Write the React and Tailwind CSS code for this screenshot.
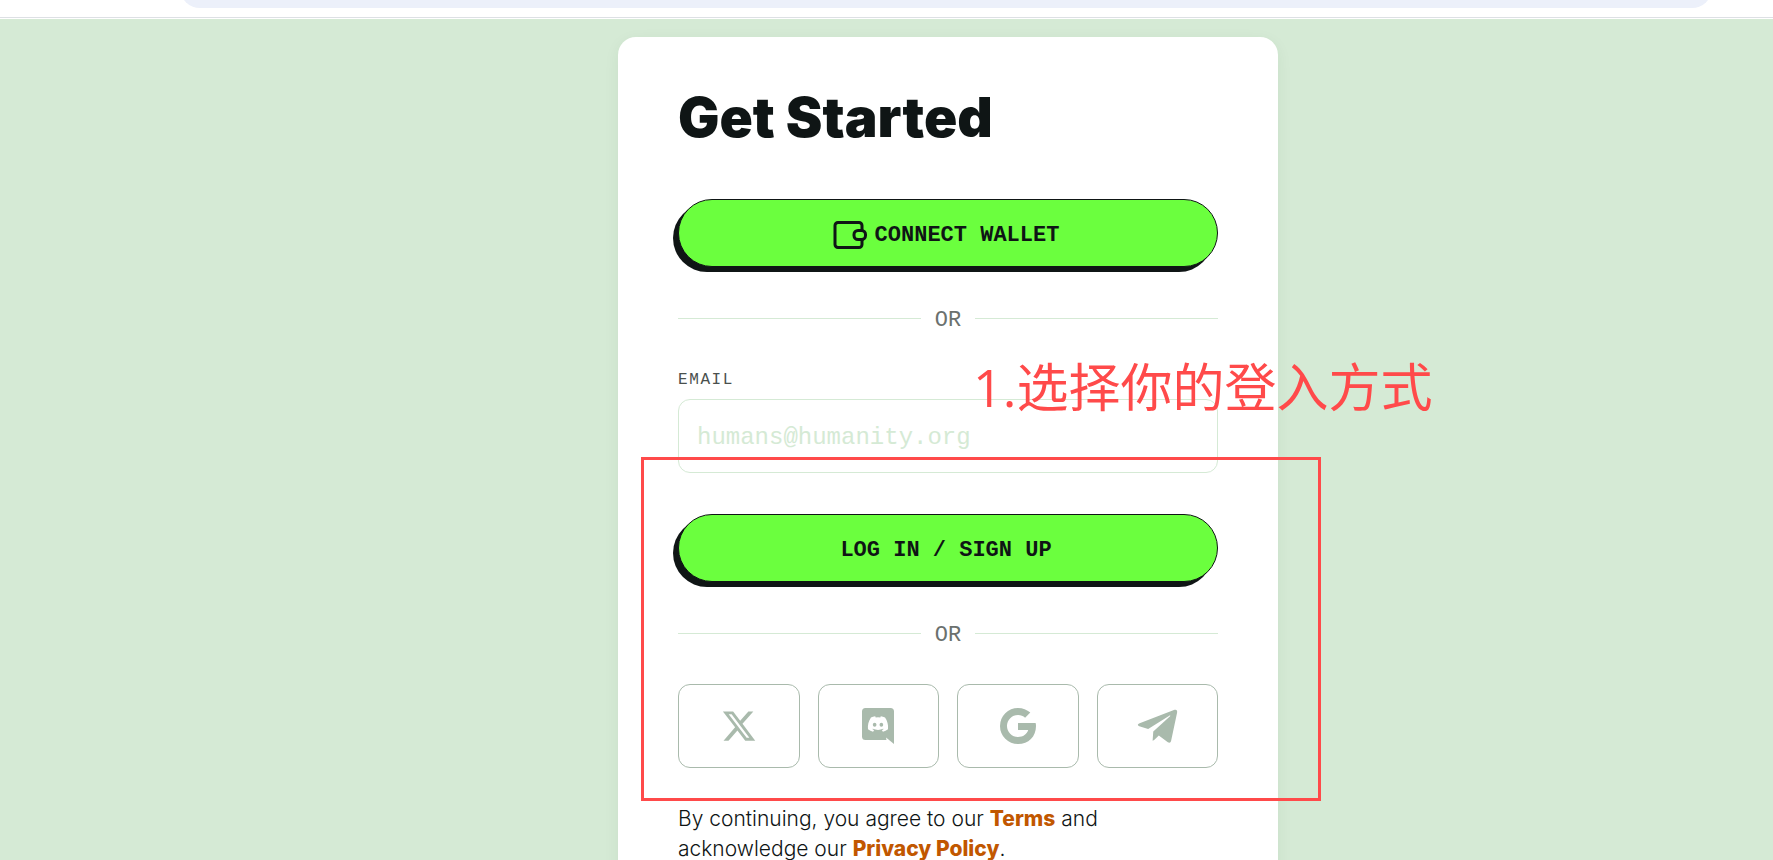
import React from 'react';
import { FaXTwitter, FaDiscord } from 'react-icons/fa6';
import { FaTelegramPlane } from 'react-icons/fa';

const WalletIcon = () => (
    <svg width="34" height="28" viewBox="0 0 34 28" fill="none" stroke="currentColor" strokeWidth="3" aria-hidden="true">
        <path d="M29 9V4.5a3 3 0 0 0-3-3H5a3 3 0 0 0-3 3v19a3 3 0 0 0 3 3h21a3 3 0 0 0 3-3V19" />
        <rect x="21" y="9.5" width="11.5" height="9" rx="4" />
    </svg>
);

const DiscordIcon = () => (
    <svg width="32" height="36" viewBox="0 0 32 36" aria-hidden="true">
        <path fill="currentColor" d="M3.5 0h25A3.5 3.5 0 0 1 32 3.5V36l-8-6.5.5 2.5h-21A3.5 3.5 0 0 1 0 28.5v-25A3.5 3.5 0 0 1 3.5 0z" />
        <FaDiscord x="5" y="5" size={22} color="#ffffff" />
    </svg>
);

const GoogleIcon = () => (
    <svg width="36" height="36" viewBox="0 0 36 36" fill="currentColor" aria-hidden="true">
        <path d="M35.6 15H18v7h10.2c-1.2 4.200-5.200 7-10.200 7a11 11 0 0 1 0-22c2.800 0 5.200 1 7.100 2.700l5.200-5.100C27 1.700 22.700 0 18 0a18 18 0 0 0 0 36c10.500 0 18-7.300 18-18 0-1-.1-2-.4-3z" />
    </svg>
);

const PrimaryButton = ({ icon, children, type = 'button' }) => (
    <button
        type={type}
        className="flex h-[68px] w-full items-center justify-center gap-2 rounded-full border border-[#0f1515] bg-[#6bff3e] pt-1 pr-1 font-['Liberation_Mono',monospace] text-[22px] font-bold text-[#0f1515] shadow-[-5px_5px_0_#0f1515]"
    >
        {icon}
        {children}
    </button>
);

const Divider = () => (
    <div className="flex h-8 items-center gap-3.5">
        <span className="h-px flex-1 bg-[#d5ead5]" />
        <span className="pt-1 font-['Liberation_Mono',monospace] text-[22px] text-[#6b716e]">OR</span>
        <span className="h-px flex-1 bg-[#d5ead5]" />
    </div>
);

const socials = [
    { name: 'X', icon: <FaXTwitter size={36} /> },
    { name: 'Discord', icon: <DiscordIcon /> },
    { name: 'Google', icon: <GoogleIcon /> },
    { name: 'Telegram', icon: <FaTelegramPlane size={45} /> },
];

const Annotation = () => (
    <div className="pointer-events-none">
        <div className="absolute top-[420px] left-[23px] h-[344px] w-[680px] border-3 border-[#ff4a4a]" />
        <p className="absolute top-[312px] left-[355px] font-['Open_Sans','Noto_Sans_CJK_SC',sans-serif] text-[52px] leading-[76px] whitespace-nowrap text-[#ff4a4a]">
            1.选择你的登入方式
        </p>
    </div>
);

const App = () => {
    return (
        <div className="flex h-screen flex-col overflow-hidden bg-[#d5ead5] font-[Inter,sans-serif] text-[#0f1515]">
            <header className="border-b border-white bg-white">
                <div className="border-b border-[#dde0e4] pr-[61px] pb-[9px] pl-[180px]">
                    <div className="flex h-2 flex-col justify-end overflow-hidden">
                        <div className="h-10 shrink-0 rounded-full bg-[#ecf0fa]" />
                    </div>
                </div>
            </header>

            <main className="flex min-h-0 flex-1 items-start justify-center overflow-hidden pt-[18px] pl-[123px]">
                <div className="relative w-[660px] rounded-[18px] bg-white px-[60px] pt-[50px] pb-16 shadow-[0_4px_16px_rgba(0,60,0,0.06)]">
                    <h1 className="text-[55px] leading-[60px] font-black">Get Started</h1>

                    <form className="mt-[52px]">
                        <PrimaryButton icon={<WalletIcon />}>CONNECT WALLET</PrimaryButton>
                        <div className="mt-[35px]">
                            <Divider />
                        </div>

                        <label htmlFor="email" className="mt-[34px] block font-['Liberation_Mono',monospace] text-base leading-6 tracking-widest text-[#4a504d]">
                            EMAIL
                        </label>
                        <input
                            id="email"
                            type="email"
                            placeholder="humans@humanity.org"
                            className="mt-[7px] block h-[74px] w-full rounded-xl border border-[#d5ead5] px-[18px] pt-0.5 font-['Liberation_Mono',monospace] text-2xl placeholder:text-[#d5ead5]"
                        />

                        <div className="mt-[41px]">
                            <PrimaryButton type="submit">LOG IN / SIGN UP</PrimaryButton>
                        </div>
                        <div className="mt-[35px]">
                            <Divider />
                        </div>
                    </form>

                    <div className="mt-[35px] grid grid-cols-4 gap-[18px]">
                        {socials.map((s) => (
                            <button
                                key={s.name}
                                type="button"
                                aria-label={s.name}
                                className="flex h-[84px] items-center justify-center rounded-xl border border-[#a9baac] text-[#a9baac]"
                            >
                                {s.icon}
                            </button>
                        ))}
                    </div>

                    <p className="mt-9 text-[21px] leading-[30px] font-light">
                        By continuing, you agree to our <a href="#terms" className="font-extrabold text-[#c15700]">Terms</a> and
                        <br />
                        acknowledge our <a href="#privacy" className="font-extrabold text-[#c15700]">Privacy Policy</a>.
                    </p>

                    <Annotation />
                </div>
            </main>
        </div>
    );
};

export default App;
